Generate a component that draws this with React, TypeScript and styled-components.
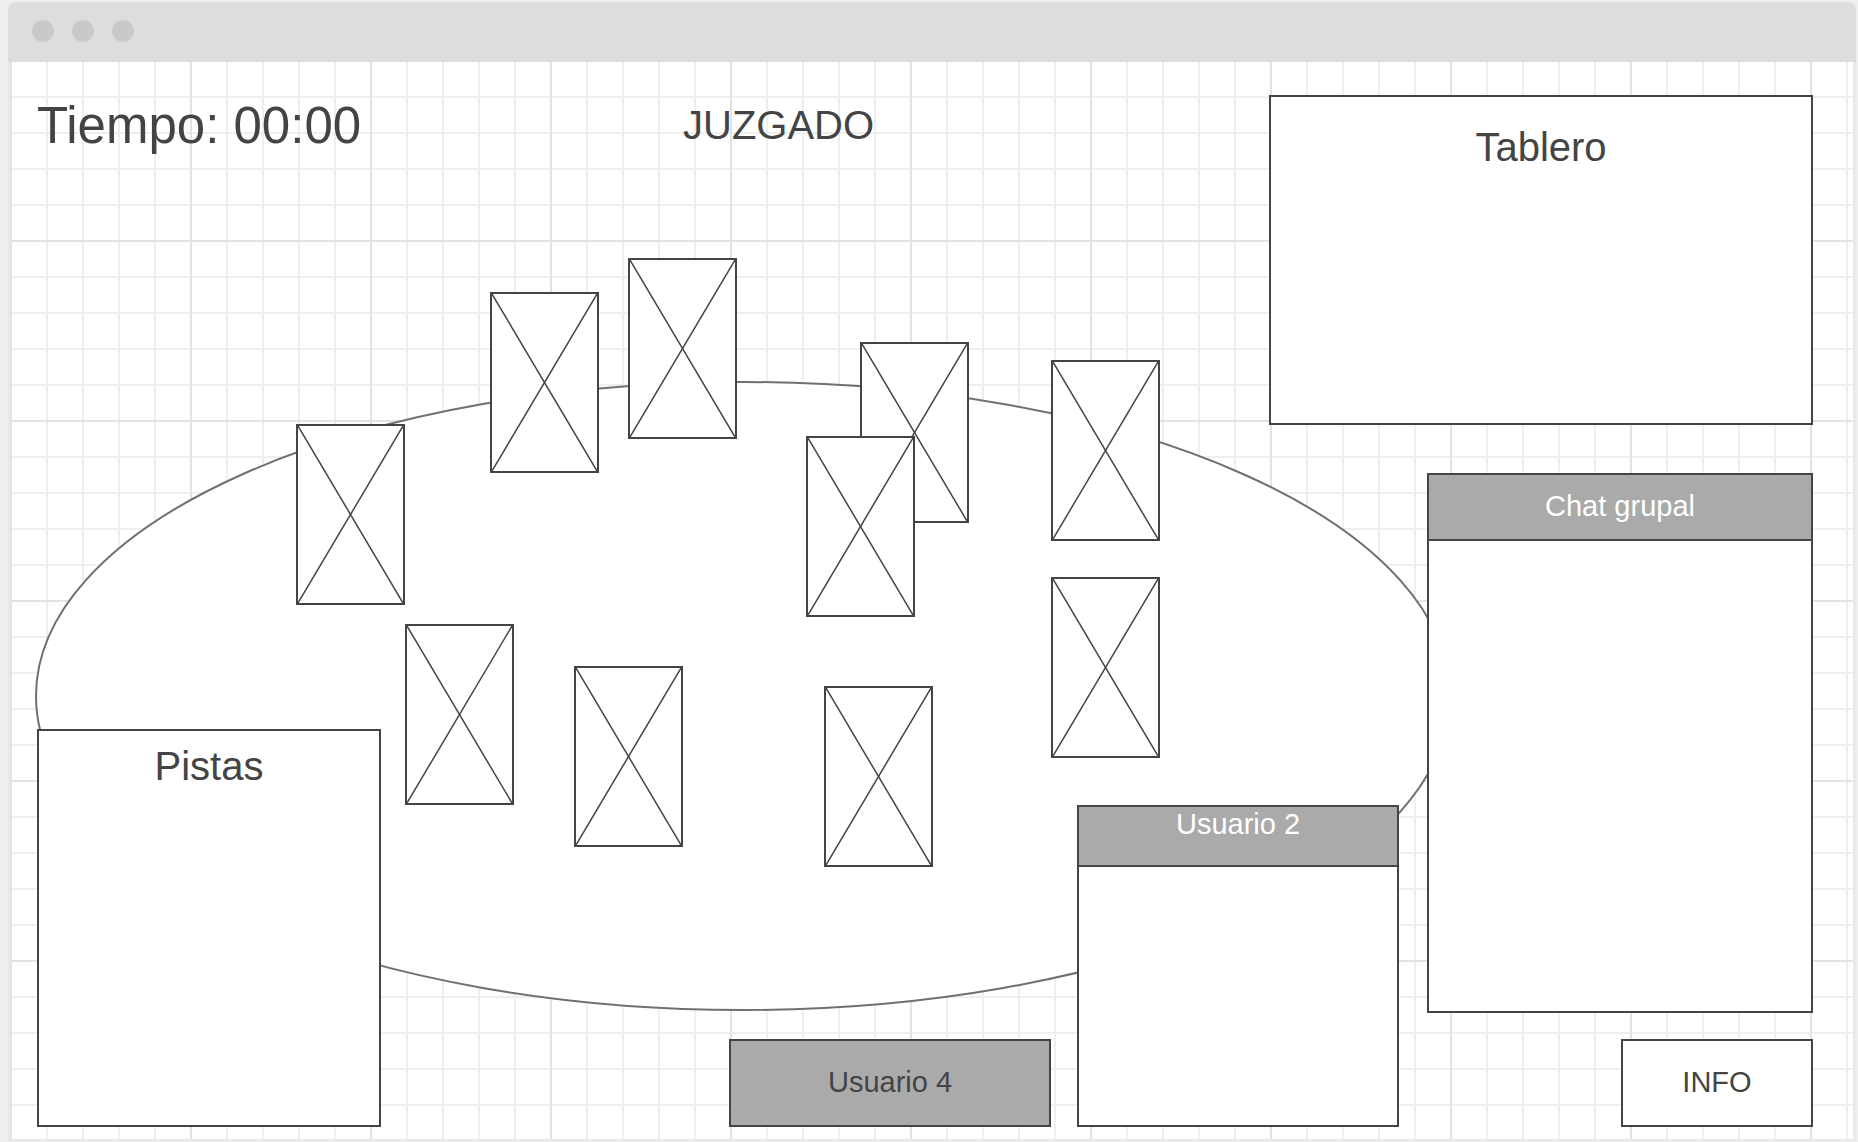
import React from 'react';
import styled, { createGlobalStyle } from 'styled-components';

const GlobalStyle = createGlobalStyle`
  * {
    box-sizing: border-box;
  }
  html,
  body {
    margin: 0;
    padding: 0;
  }
  body {
    background: #efefef;
    font-family: 'Liberation Sans', Arial, sans-serif;
    color: #444;
    overflow: hidden;
  }
`;

const Window = styled.div`
  width: 1848px;
  margin: 2px 0 0 8px;
  display: flex;
  flex-direction: column;
`;

const TitleBar = styled.div`
  height: 60px;
  background: #dddddd;
  border-radius: 8px 8px 0 0;
  display: flex;
  align-items: center;
  gap: 18px;
  padding: 0 0 2px 24px;
`;

const Dot = styled.span`
  width: 22px;
  height: 22px;
  border-radius: 50%;
  background: #c9c9c9;
`;

const Canvas = styled.main`
  position: relative;
  height: 1079px;
  border: solid #e8e8e8;
  border-width: 0 3px 2px 2px;
  padding: 33px 40px 12px 27px;
  display: flex;
  flex-direction: column;
  background-color: #fff;
  background-image:
    linear-gradient(to right, #e3e3e3 2px, transparent 2px),
    linear-gradient(to bottom, #e3e3e3 2px, transparent 2px),
    linear-gradient(to right, #efefef 2px, transparent 2px),
    linear-gradient(to bottom, #efefef 2px, transparent 2px);
  background-size:
    180px 100%,
    100% 180px,
    36px 100%,
    100% 36px;
  background-position:
    0 0,
    0 178px,
    0 0,
    0 34px;
`;

/* the table with the evidence cards lying on it */
const Table = styled.div`
  position: absolute;
  inset: 0;
  z-index: 0;
  pointer-events: none;

  > svg {
    position: absolute;
    left: 0;
    top: 0;
  }
`;

const Card = styled.div<{ $x: number; $y: number }>`
  position: absolute;
  left: ${(p) => p.$x}px;
  top: ${(p) => p.$y}px;
  width: 109px;
  height: 181px;
  border: 2px solid #444;
  background: #fff;

  svg {
    display: block;
    width: 100%;
    height: 100%;
  }
`;

const TopRow = styled.div`
  position: relative;
  z-index: 1;
  height: 330px;
  display: flex;
  justify-content: space-between;
  align-items: flex-start;
`;

const Header = styled.header`
  display: grid;
  grid-template-columns: 646px auto;
  align-items: start;
`;

const Timer = styled.h1`
  margin: 5px 0 0;
  font-size: 51px;
  font-weight: 400;
  line-height: 1;
  white-space: nowrap;
`;

const Title = styled.h2`
  margin: 10px 0 0;
  font-size: 40px;
  font-weight: 400;
  line-height: 1;
`;

const Panel = styled.section<{ $w: number; $h: number; $pad?: number }>`
  position: relative;
  z-index: 1;
  width: ${(p) => p.$w}px;
  height: ${(p) => p.$h}px;
  flex-shrink: 0;
  border: 2px solid #444;
  background: #fff;
  display: flex;
  flex-direction: column;
  padding-top: ${(p) => p.$pad ?? 0}px;
`;

const PanelTitle = styled.div`
  font-size: 40px;
  line-height: 1;
  text-align: center;
`;

const GrayHead = styled.div<{ $h: number; $pad: number }>`
  height: ${(p) => p.$h}px;
  padding-top: ${(p) => p.$pad}px;
  background: #aaaaaa;
  border-bottom: 2px solid #444;
  color: #fff;
  font-size: 29px;
  line-height: 32px;
  text-align: center;
`;

const Button = styled.div<{ $w: number; $gray?: boolean }>`
  position: relative;
  z-index: 1;
  width: ${(p) => p.$w}px;
  height: 88px;
  flex-shrink: 0;
  border: 2px solid #444;
  background: ${(p) => (p.$gray ? '#aaaaaa' : '#fff')};
  display: flex;
  align-items: center;
  justify-content: center;
  padding-bottom: 3px;
  font-size: 29px;
  line-height: 32px;
  color: #444;
`;

const BottomRow = styled.div`
  position: relative;
  z-index: 1;
  margin-top: 48px;
  height: 654px;
  display: flex;
  justify-content: space-between;
  align-items: flex-end;
`;

const Players = styled.div`
  display: flex;
  align-items: flex-end;
  gap: 26px;

  > :first-child {
    margin-right: 322px;
  }
`;

const SideColumn = styled.div`
  display: flex;
  flex-direction: column;
  align-items: flex-end;
  gap: 26px;
`;

const cards = [
  { x: 286, y: 362 },
  { x: 480, y: 230 },
  { x: 618, y: 196 },
  { x: 850, y: 280 },
  { x: 796, y: 374 },
  { x: 1041, y: 298 },
  { x: 1041, y: 515 },
  { x: 395, y: 562 },
  { x: 564, y: 604 },
  { x: 814, y: 624 },
];

const Cross = () => (
  <svg viewBox="0 0 100 100" preserveAspectRatio="none">
    <line x1="0" y1="0" x2="100" y2="100" stroke="#444" strokeWidth="1.5" vectorEffect="non-scaling-stroke" />
    <line x1="100" y1="0" x2="0" y2="100" stroke="#444" strokeWidth="1.5" vectorEffect="non-scaling-stroke" />
  </svg>
);

const App = () => {
  return (
    <>
      <GlobalStyle />
      <Window>
        <TitleBar>
          <Dot />
          <Dot />
          <Dot />
        </TitleBar>
        <Canvas>
          <Table>
            <svg width="1500" height="1000">
              <ellipse cx="733" cy="634" rx="707" ry="314" fill="#fff" stroke="#707070" strokeWidth="2" />
            </svg>
            {cards.map((c, i) => (
              <Card key={i} $x={c.x} $y={c.y}>
                <Cross />
              </Card>
            ))}
          </Table>

          <TopRow>
            <Header>
              <Timer>Tiempo: 00:00</Timer>
              <Title>JUZGADO</Title>
            </Header>
            <Panel $w={544} $h={330} $pad={30}>
              <PanelTitle>Tablero</PanelTitle>
            </Panel>
          </TopRow>

          <BottomRow>
            <Players>
              <Panel $w={344} $h={398} $pad={15}>
                <PanelTitle>Pistas</PanelTitle>
              </Panel>
              <Button $w={322} $gray>
                Usuario 4
              </Button>
              <Panel $w={322} $h={322}>
                <GrayHead $h={60} $pad={1}>
                  Usuario 2
                </GrayHead>
              </Panel>
            </Players>
            <SideColumn>
              <Panel $w={386} $h={540}>
                <GrayHead $h={66} $pad={15}>
                  Chat grupal
                </GrayHead>
              </Panel>
              <Button $w={192}>INFO</Button>
            </SideColumn>
          </BottomRow>
        </Canvas>
      </Window>
    </>
  );
};

export default App;
